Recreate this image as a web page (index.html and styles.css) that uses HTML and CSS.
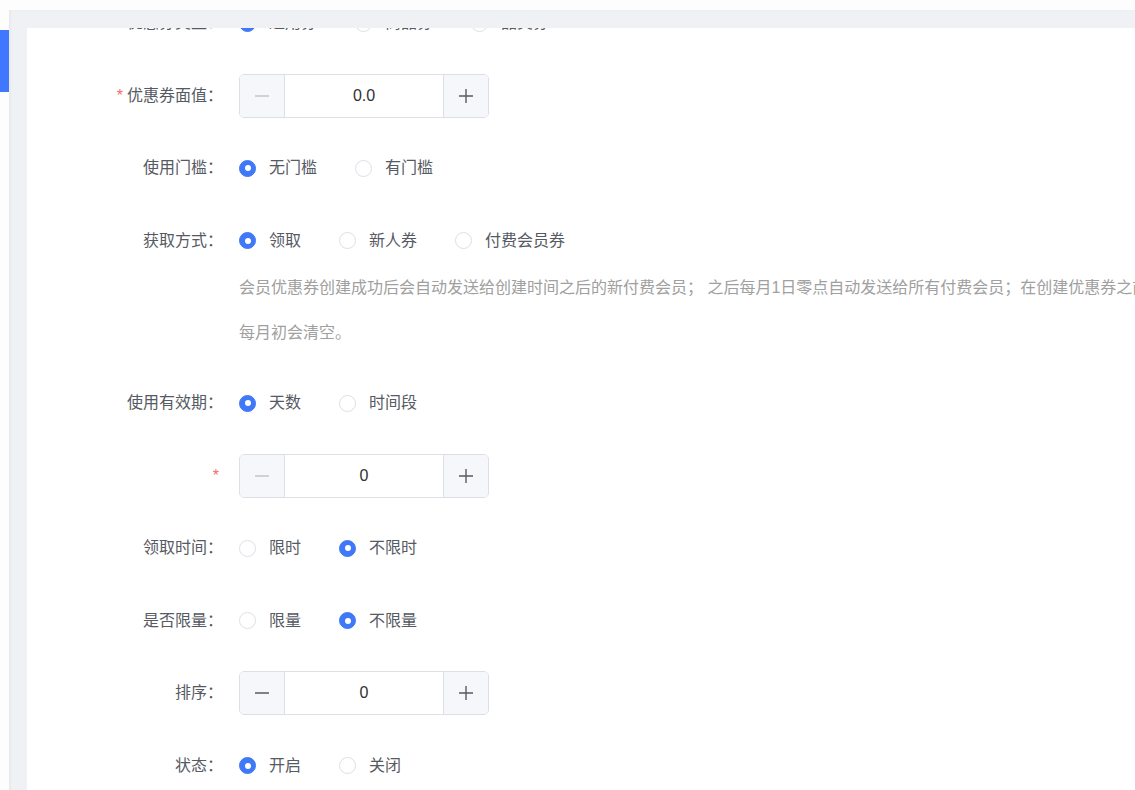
FILE: index.html
```html
<!DOCTYPE html>
<html lang="zh-CN">
<head>
  <meta charset="UTF-8">
  <title>添加优惠券</title>
  <link rel="stylesheet" href="styles.css">
</head>
<body>

  <div class="layout">
    <aside class="side">
      <div class="side-active"></div>
    </aside>

    <main class="main">
      <div class="panel">
        <!-- el formulario ya está desplazado hacia abajo -->
        <form class="form">

          <div class="form-item">
            <label class="form-label">优惠券类型：</label>
            <div class="form-content">
              <div class="radio-group">
                <span class="radio checked"><span class="radio-dot"></span><span class="radio-text">通用券</span></span>
                <span class="radio"><span class="radio-dot"></span><span class="radio-text">商品券</span></span>
                <span class="radio"><span class="radio-dot"></span><span class="radio-text">品类券</span></span>
              </div>
            </div>
          </div>

          <div class="form-item">
            <label class="form-label required">优惠券面值：</label>
            <div class="form-content">
              <div class="input-number">
                <span class="num-btn disabled">
                  <svg width="16" height="16" viewBox="0 0 16 16"><path d="M1 8h14" stroke="currentColor" stroke-width="1.4"/></svg>
                </span>
                <span class="num-value">0.0</span>
                <span class="num-btn">
                  <svg width="16" height="16" viewBox="0 0 16 16"><path d="M1 8h14M8 1v14" stroke="currentColor" stroke-width="1.4"/></svg>
                </span>
              </div>
            </div>
          </div>

          <div class="form-item">
            <label class="form-label">使用门槛：</label>
            <div class="form-content">
              <div class="radio-group">
                <span class="radio checked"><span class="radio-dot"></span><span class="radio-text">无门槛</span></span>
                <span class="radio"><span class="radio-dot"></span><span class="radio-text">有门槛</span></span>
              </div>
            </div>
          </div>

          <div class="form-item">
            <label class="form-label">获取方式：</label>
            <div class="form-content">
              <div class="radio-group">
                <span class="radio checked"><span class="radio-dot"></span><span class="radio-text">领取</span></span>
                <span class="radio"><span class="radio-dot"></span><span class="radio-text">新人券</span></span>
                <span class="radio"><span class="radio-dot"></span><span class="radio-text">付费会员券</span></span>
              </div>
              <div class="form-tip">
                <div>会员优惠券创建成功后会自动发送给创建时间之后的新付费会员； 之后每月1日零点自动发送给所有付费会员；在创建优惠券之前的付费会员次月领取，未使用的</div>
                <div>每月初会清空。</div>
              </div>
            </div>
          </div>

          <div class="form-item">
            <label class="form-label">使用有效期：</label>
            <div class="form-content">
              <div class="radio-group">
                <span class="radio checked"><span class="radio-dot"></span><span class="radio-text">天数</span></span>
                <span class="radio"><span class="radio-dot"></span><span class="radio-text">时间段</span></span>
              </div>
            </div>
          </div>

          <div class="form-item">
            <label class="form-label required"></label>
            <div class="form-content">
              <div class="input-number">
                <span class="num-btn disabled">
                  <svg width="16" height="16" viewBox="0 0 16 16"><path d="M1 8h14" stroke="currentColor" stroke-width="1.4"/></svg>
                </span>
                <span class="num-value">0</span>
                <span class="num-btn">
                  <svg width="16" height="16" viewBox="0 0 16 16"><path d="M1 8h14M8 1v14" stroke="currentColor" stroke-width="1.4"/></svg>
                </span>
              </div>
            </div>
          </div>

          <div class="form-item">
            <label class="form-label">领取时间：</label>
            <div class="form-content">
              <div class="radio-group">
                <span class="radio"><span class="radio-dot"></span><span class="radio-text">限时</span></span>
                <span class="radio checked"><span class="radio-dot"></span><span class="radio-text">不限时</span></span>
              </div>
            </div>
          </div>

          <div class="form-item">
            <label class="form-label">是否限量：</label>
            <div class="form-content">
              <div class="radio-group">
                <span class="radio"><span class="radio-dot"></span><span class="radio-text">限量</span></span>
                <span class="radio checked"><span class="radio-dot"></span><span class="radio-text">不限量</span></span>
              </div>
            </div>
          </div>

          <div class="form-item">
            <label class="form-label">排序：</label>
            <div class="form-content">
              <div class="input-number">
                <span class="num-btn">
                  <svg width="16" height="16" viewBox="0 0 16 16"><path d="M1 8h14" stroke="currentColor" stroke-width="1.4"/></svg>
                </span>
                <span class="num-value">0</span>
                <span class="num-btn">
                  <svg width="16" height="16" viewBox="0 0 16 16"><path d="M1 8h14M8 1v14" stroke="currentColor" stroke-width="1.4"/></svg>
                </span>
              </div>
            </div>
          </div>

          <div class="form-item">
            <label class="form-label">状态：</label>
            <div class="form-content">
              <div class="radio-group">
                <span class="radio checked"><span class="radio-dot"></span><span class="radio-text">开启</span></span>
                <span class="radio"><span class="radio-dot"></span><span class="radio-text">关闭</span></span>
              </div>
            </div>
          </div>

        </form>
      </div>
    </main>
  </div>

</body>
</html>
```

FILE: styles.css
```css
:root {
  --primary: #4079f7;
  --bg-gray: #f0f1f5;
  --border: #dcdfe6;
  --text: #565a63;
  --text-value: #303133;
  --tip: #a0a0a0;
  --danger: #f56c6c;
}

body {
  margin: 0;
  overflow: hidden;
  background: #fdfdfd;
  font-family: "Liberation Sans", "Noto Sans CJK SC", sans-serif;
  font-size: 16px;
  color: var(--text);
}

.layout {
  display: flex;
  height: 100vh;
}

.side {
  width: 9px;
  flex-shrink: 0;
}

.side-active {
  margin-top: 30px;
  height: 62px;
  background: #3f78ff;
}

.main {
  flex: 1;
  min-width: 0;
  margin-top: 10px;
  padding: 18px 0 0 18px;
  background: var(--bg-gray);
  box-shadow: inset 2px 0 2px rgba(0, 0, 0, 0.03);
}

.panel {
  height: 100%;
  background: #fff;
  overflow: hidden;
}

.form {
  width: 1600px;
  margin-top: -27px;
}

.form-item {
  display: flex;
  align-items: flex-start;
  margin-bottom: 28.5px;
}

.form-label {
  width: 212px;
  flex-shrink: 0;
  box-sizing: border-box;
  padding-right: 16px;
  text-align: right;
  line-height: 44px;
  height: 44px;
  color: var(--text);
}

.form-label.required::before {
  content: "*";
  color: var(--danger);
  margin-right: 4px;
}

.form-content {
  flex: 1;
  min-height: 44px;
}

/* radios */
.radio-group {
  display: flex;
  align-items: center;
  height: 44px;
}

.radio {
  display: inline-flex;
  align-items: center;
  margin-right: 38px;
  cursor: pointer;
}

.radio-dot {
  position: relative;
  width: 17px;
  height: 17px;
  box-sizing: border-box;
  border: 1px solid var(--border);
  border-radius: 50%;
  background: #fff;
}

.radio.checked .radio-dot {
  background: var(--primary);
  border-color: var(--primary);
}

.radio.checked .radio-dot::after {
  content: "";
  position: absolute;
  left: 50%;
  top: 50%;
  width: 6px;
  height: 6px;
  margin: -3px 0 0 -3px;
  border-radius: 50%;
  background: #fff;
}

.radio-text {
  padding-left: 13px;
  line-height: 20px;
  color: var(--text);
}

.form-tip {
  color: var(--tip);
  line-height: 45px;
  padding-top: 2px;
  margin-bottom: -2px;
  white-space: nowrap;
}

/* input number */
.input-number {
  display: flex;
  width: 250px;
  height: 44px;
  box-sizing: border-box;
  border: 1px solid var(--border);
  border-radius: 5px;
  overflow: hidden;
}

.num-btn {
  width: 44px;
  display: flex;
  align-items: center;
  justify-content: center;
  background: #f5f7fa;
  color: var(--text);
  cursor: pointer;
}

.num-btn:first-child {
  border-right: 1px solid var(--border);
}

.num-btn:last-child {
  border-left: 1px solid var(--border);
}

.num-btn.disabled {
  color: #c0c4cc;
  cursor: not-allowed;
}

.num-value {
  flex: 1;
  text-align: center;
  line-height: 42px;
  color: var(--text-value);
}
```
